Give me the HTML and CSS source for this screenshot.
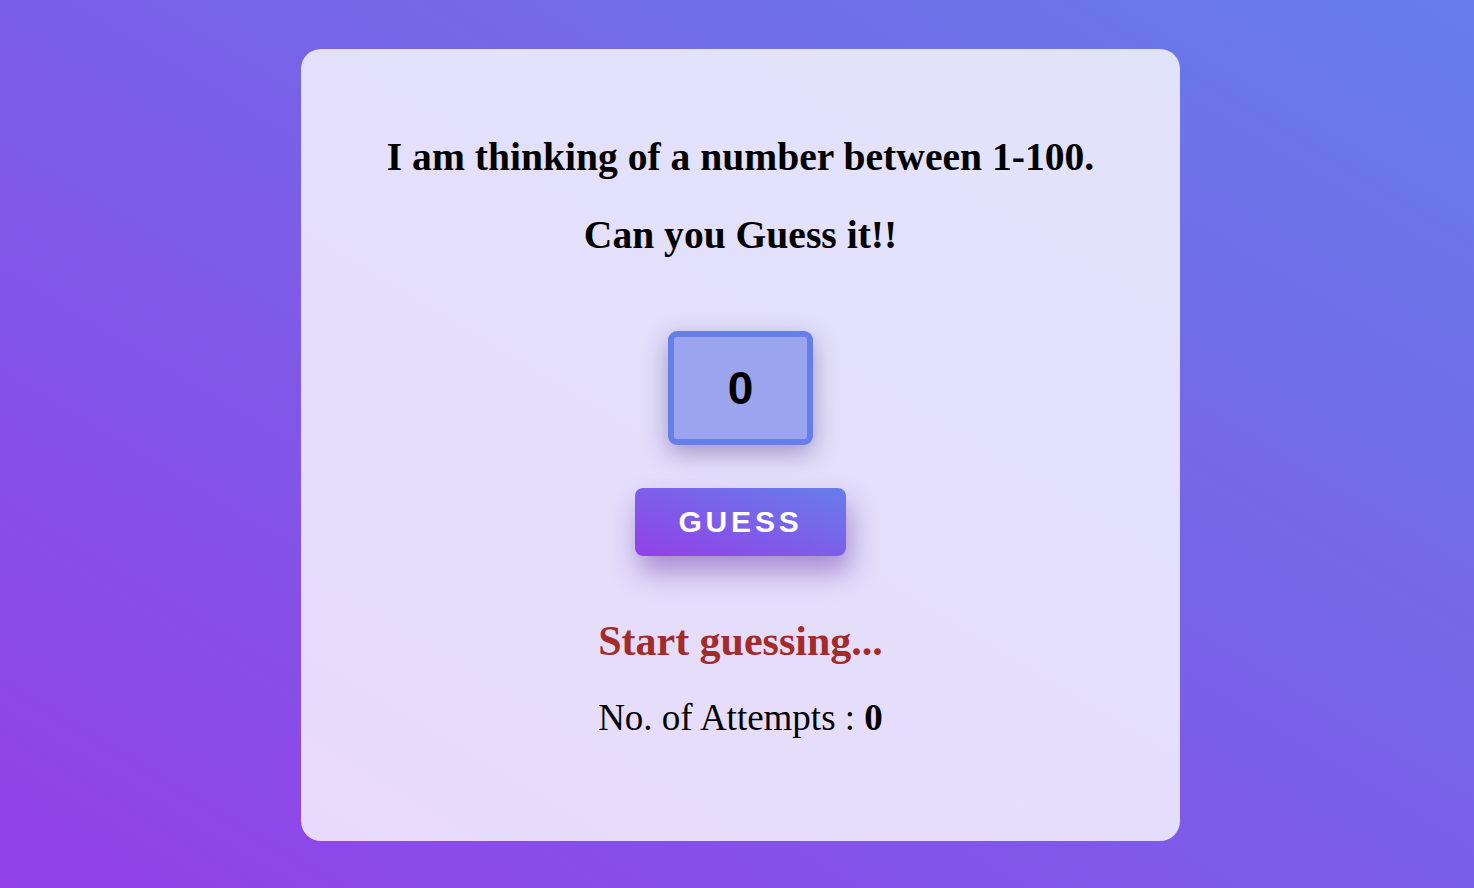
FILE: index.html
```html
<!DOCTYPE html>
<html lang="en">
<head>
<meta charset="UTF-8">
<title>Guess the Number</title>
<link rel="stylesheet" href="styles.css">
</head>
<body>
<main class="card">
  <h1 class="title">I am thinking of a number between 1-100.</h1>
  <h1 class="title sub">Can you Guess it!!</h1>
  <input class="guess-input" type="text" value="0">
  <button class="guess-btn">GUESS</button>
  <p class="status">Start guessing...</p>
  <p class="attempts">No. of Attempts : <b>0</b></p>
</main>
</body>
</html>
```
FILE: styles.css
```css
* { box-sizing: border-box; }
html, body { height: 100%; }
body {
  margin: 0;
  background: linear-gradient(to top right, #9340e8 0%, #7a5fe8 50%, #667eea 100%);
  font-family: "Liberation Serif", "Times New Roman", serif;
  display: flex;
  justify-content: center;
  padding-top: 49px;
  padding-left: 7px;
}
.card {
  width: 879px;
  height: 792px;
  background: rgba(255, 255, 255, 0.8);
  border-radius: 20px;
  display: flex;
  flex-direction: column;
  align-items: center;
  padding-top: 85px;
}
.title {
  margin: 0;
  font-size: 39.6px;
  font-weight: bold;
  line-height: 46px;
  color: #000;
}
.sub { margin-top: 32px; }
.guess-input {
  margin-top: 73px;
  width: 145px;
  height: 114px;
  border: 6px solid #667eea;
  border-radius: 9px;
  background: #9ba5ef;
  text-align: center;
  font-family: "Liberation Sans", Arial, sans-serif;
  font-weight: bold;
  font-size: 46px;
  color: #000;
  box-shadow: 0 8px 24px rgba(60, 40, 120, 0.4);
  outline: none;
}
.guess-btn {
  margin-top: 43px;
  width: 211px;
  height: 68px;
  border: none;
  border-radius: 8px;
  background: linear-gradient(to top right, #9340e8, #667eea);
  color: #fff;
  font-family: "Liberation Sans", Arial, sans-serif;
  font-weight: bold;
  font-size: 30px;
  letter-spacing: 3.8px;
  padding-left: 6px;
  box-shadow: 4px 16px 28px rgba(90, 40, 160, 0.45);
}
.status {
  margin: 61px 0 0;
  font-size: 42px;
  font-weight: bold;
  color: #a52a2a;
  line-height: 48px;
}
.attempts {
  margin: 32px 0 0;
  font-size: 37px;
  line-height: 42px;
  color: #000;
}
```
